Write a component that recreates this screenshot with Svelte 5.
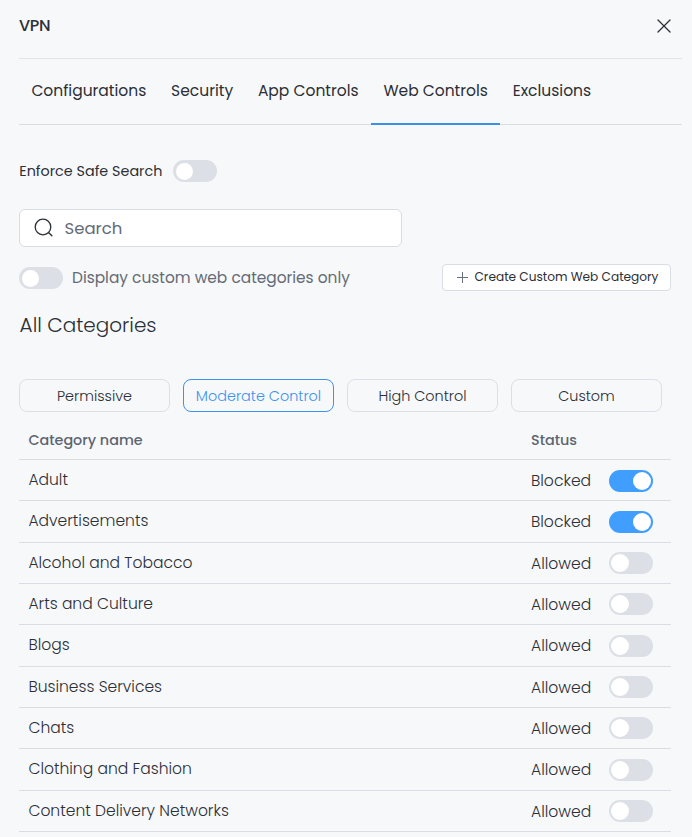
<script lang="ts">
  const tabs = ['Configurations', 'Security', 'App Controls', 'Web Controls', 'Exclusions'];
  const presets = ['Permissive', 'Moderate Control', 'High Control', 'Custom'];

  let activeTab = $state('Web Controls');
  let activePreset = $state('Moderate Control');
  let safeSearch = $state(false);
  let customOnly = $state(false);
  let query = $state('');

  let categories = $state([
    { name: 'Adult', blocked: true },
    { name: 'Advertisements', blocked: true },
    { name: 'Alcohol and Tobacco', blocked: false },
    { name: 'Arts and Culture', blocked: false },
    { name: 'Blogs', blocked: false },
    { name: 'Business Services', blocked: false },
    { name: 'Chats', blocked: false },
    { name: 'Clothing and Fashion', blocked: false },
    { name: 'Content Delivery Networks', blocked: false }
  ]);

  const visible = $derived(
    categories.filter((c) => c.name.toLowerCase().includes(query.toLowerCase()))
  );
</script>

<div class="panel">
  <header class="header">
    <h1 class="title">VPN</h1>
    <button type="button" class="close" aria-label="Close">
      <svg width="14" height="14" viewBox="0 0 14 14" fill="none" stroke="currentColor">
        <path stroke-linecap="round" stroke-width="1.3" d="M1 1l12 12M13 1L1 13" />
      </svg>
    </button>
  </header>

  <nav class="tabs">
    {#each tabs as tab}
      <button type="button" class="tab" class:active={tab === activeTab} onclick={() => (activeTab = tab)}>
        {tab}
      </button>
    {/each}
  </nav>

  <main class="content">
    <div class="safe-search">
      <span class="safe-label">Enforce Safe Search</span>
      <button
        type="button"
        class="switch small"
        class:on={safeSearch}
        role="switch"
        aria-checked={safeSearch}
        aria-label="Enforce Safe Search"
        onclick={() => (safeSearch = !safeSearch)}
      ></button>
    </div>

    <label class="search">
      <svg width="20" height="20" viewBox="0 0 20 20" fill="none" stroke="currentColor">
        <circle cx="9" cy="9" r="7.8" stroke-width="1.3" />
        <path stroke-linecap="round" stroke-width="1.4" d="M14.7 14.7l3.2 3.1" />
      </svg>
      <input type="text" placeholder="Search" bind:value={query} />
    </label>

    <div class="options">
      <button
        type="button"
        class="switch small"
        class:on={customOnly}
        role="switch"
        aria-checked={customOnly}
        aria-label="Display custom web categories only"
        onclick={() => (customOnly = !customOnly)}
      ></button>
      <span class="custom-label">Display custom web categories only</span>
      <button type="button" class="create">
        <svg width="11" height="11" viewBox="0 0 11 11" fill="none" stroke="currentColor">
          <path d="M5.5 0v11M0 5.5h11" />
        </svg>
        <span>Create Custom Web Category</span>
      </button>
    </div>

    <h2 class="heading">All Categories</h2>

    <div class="presets">
      {#each presets as preset}
        <button
          type="button"
          class="preset"
          class:active={preset === activePreset}
          onclick={() => (activePreset = preset)}
        >
          {preset}
        </button>
      {/each}
    </div>

    <div class="table">
      <div class="row head">
        <span>Category name</span>
        <span>Status</span>
      </div>
      {#each visible as category}
        <div class="row">
          <span class="name">{category.name}</span>
          <span class="status">{category.blocked ? 'Blocked' : 'Allowed'}</span>
          <button
            type="button"
            class="switch"
            class:on={category.blocked}
            role="switch"
            aria-checked={category.blocked}
            aria-label={category.name}
            onclick={() => (category.blocked = !category.blocked)}
          ></button>
        </div>
      {/each}
    </div>
  </main>
</div>

<style>
  :global(body) {
    background: #f7f8fa;
  }

  .panel {
    height: 837px;
    overflow: hidden;
    box-sizing: border-box;
    padding: 0 10px 0 19px;
    background: #f7f8fa;
    color: #2b2f36;
    font-family: Poppins, Inter, sans-serif;
    font-size: 15.5px;
  }

  button {
    font: inherit;
    color: inherit;
    background: none;
    border: none;
    padding: 0;
    cursor: pointer;
  }

  svg {
    display: block;
    flex: none;
  }

  .header {
    display: flex;
    align-items: center;
    justify-content: space-between;
    height: 52px;
    padding: 0 11px 6px 0;
    border-bottom: 1px solid #e1e4e9;
  }

  .title {
    margin: 0;
    padding-bottom: 2px;
    font-size: 16px;
    font-weight: 500;
    letter-spacing: -0.3px;
  }

  .tabs {
    display: flex;
    height: 65px;
    border-bottom: 1px solid #d9dde4;
  }

  .tab {
    height: 66px;
    box-sizing: border-box;
    padding: 0 12.4px 1px;
    border-bottom: 2px solid transparent;
    font-size: 15.52px;
    white-space: nowrap;
  }

  .tab.active {
    border-bottom-color: #3c90e6;
  }

  .content {
    padding-right: 11px;
  }

  .safe-search {
    display: flex;
    align-items: center;
    gap: 10.5px;
    height: 22px;
    margin-top: 35px;
  }

  .safe-label {
    padding-left: 0.3px;
    font-size: 14.35px;
  }

  .switch {
    flex: none;
    width: 44px;
    height: 22px;
    border-radius: 11px;
    padding: 2px;
    background: #dcdfe6;
  }

  .switch::before {
    content: '';
    display: block;
    width: 18px;
    height: 18px;
    border-radius: 50%;
    background: #fff;
  }

  .switch.small {
    padding: 3px;
  }

  .switch.small::before {
    width: 17px;
    height: 17px;
  }

  .switch.on {
    background: #409eff;
  }

  .switch.on::before {
    margin-left: auto;
  }

  .search {
    display: flex;
    align-items: center;
    gap: 10.5px;
    box-sizing: border-box;
    width: 383px;
    height: 38px;
    margin-top: 27px;
    padding-left: 14px;
    background: #fff;
    border: 1px solid #d8dde4;
    border-radius: 6px;
  }

  .search input {
    flex: 1;
    min-width: 0;
    border: none;
    outline: none;
    padding: 0;
    background: none;
    font-family: inherit;
    font-size: 16.5px;
    color: #2b2f36;
  }

  .search input::placeholder {
    color: #646b75;
    opacity: 1;
  }

  .options {
    display: flex;
    align-items: center;
    height: 27px;
    margin-top: 17px;
  }

  .custom-label {
    margin-left: 9px;
    color: #646b75;
    font-size: 15.4px;
    white-space: nowrap;
  }

  .create {
    display: flex;
    align-items: center;
    gap: 7px;
    box-sizing: border-box;
    width: 229px;
    height: 27px;
    margin-left: auto;
    padding: 0 0 1px 13.5px;
    border: 1px solid #d8dde6;
    border-radius: 4px;
    background: #fff;
    font-size: 12.15px;
    white-space: nowrap;
  }

  .create svg {
    color: #6b717b;
  }

  .heading {
    height: 30px;
    margin: 19px 0 0 0.6px;
    font-size: 20px;
    line-height: 30px;
    font-weight: 300;
  }

  .presets {
    display: flex;
    gap: 13px;
    margin-top: 39px;
  }

  .preset {
    box-sizing: border-box;
    width: 151px;
    height: 33px;
    padding-top: 2px;
    border: 1px solid #dcdfe6;
    border-radius: 8px;
    font-size: 14.4px;
    font-weight: 300;
    white-space: nowrap;
  }

  .preset.active {
    border-color: #3c93ee;
    color: #3c93ee;
  }

  .row {
    display: grid;
    grid-template-columns: 502.6px 78px 44px;
    align-items: center;
    box-sizing: border-box;
    height: 41.33px;
    padding: 0.7px 0 0 9.4px;
    border-bottom: 1px solid #d9dde4;
  }

  .row.head {
    height: 48px;
    padding-top: 9px;
    color: #5d6570;
    font-size: 14.35px;
    font-weight: 500;
  }

  .name {
    font-size: 15.55px;
    font-weight: 300;
    padding-bottom: 2px;
  }

  .status {
    font-size: 15.6px;
    font-weight: 300;
  }
</style>
